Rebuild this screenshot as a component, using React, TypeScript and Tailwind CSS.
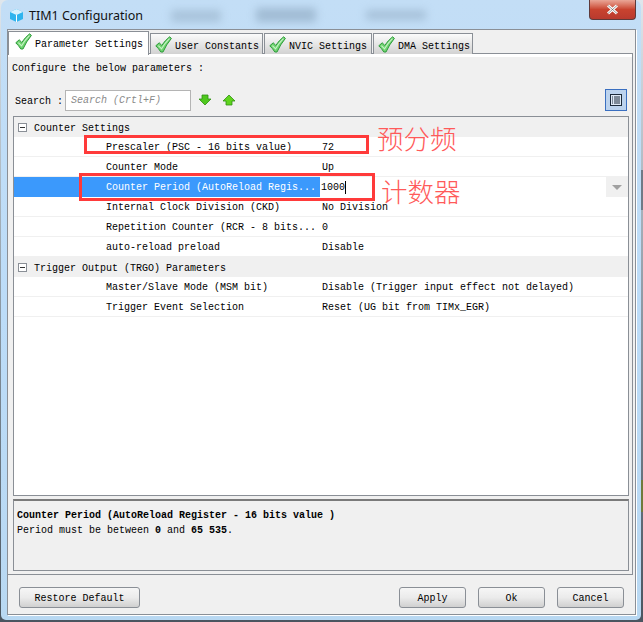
const mono = "font-['Liberation_Mono',monospace] text-[10px]";

function Check({ lift }: { lift?: boolean }) {
  return (
    <svg width="17" height="17" viewBox="0 0 17 17" className={`shrink-0 relative ${lift ? "-top-[2px]" : ""}`}>
      <path d="M0.8 9.8 L4.2 6.8 L6.8 9.4 Q10 4.4 14.6 0.8 L16.4 2.4 Q11.2 8.6 8 16 L5.8 16 Q3.6 12.4 0.8 9.8 Z" fill="#6fd36f" stroke="#2f9a3c" strokeWidth="1" strokeLinejoin="round" />
      <path d="M3.4 9.6 L6.6 12.8 Q10 6.8 14.4 2.6" fill="none" stroke="#c9f3c9" strokeWidth="1.1" />
    </svg>
  );
}

function Tab({ label, active, w }: { label: string; active?: boolean; w: string }) {
  return active ? (
    <div className={`${w} h-[24px] bg-white border border-[#8a8f96] border-b-0 flex items-center pl-[6px] gap-[3px] relative z-10`}>
      <Check lift />
      <span className="text-black whitespace-pre relative top-px">{label}</span>
    </div>
  ) : (
    <div className={`${w} h-[21px] mt-[2px] ml-px border border-[#8a8f96] border-b-0 bg-gradient-to-b from-[#fbfbfb] to-[#d2d2d2] flex items-center pl-[4px] pt-px gap-[3px]`}>
      <Check />
      <span className="text-black whitespace-pre relative top-[2px]">{label}</span>
    </div>
  );
}

function Group({ label }: { label: string }) {
  return (
    <div className="h-[20px] bg-[#f0f0f0] flex items-center pl-[4px] gap-[7px]">
      <span className="w-[9px] h-[9px] border border-[#8a8f96] bg-white flex items-center justify-center">
        <span className="w-[5px] h-px bg-[#333]" />
      </span>
      <span className="whitespace-pre text-black relative top-px">{label}</span>
    </div>
  );
}

function Row({ name, value }: { name: string; value: string }) {
  return (
    <div className="h-[20px] pt-[2px] flex items-center border-b border-[#f0f0f0]">
      <div className="w-[306px] shrink-0 pl-[92px] whitespace-pre text-black">{name}</div>
      <div className="pl-[2px] whitespace-pre text-black">{value}</div>
    </div>
  );
}

function Btn({ label, w }: { label: string; w: string }) {
  return (
    <div className={`${w} h-[21px] pt-px border border-[#8a8f96] rounded-[3px] bg-gradient-to-b from-[#f6f6f6] via-[#ebebeb] to-[#d0d0d0] flex items-center justify-center text-black`}>
      {label}
    </div>
  );
}

export default function App() {
  return (
    <div className="relative w-[643px] h-[622px] overflow-hidden bg-gradient-to-b from-[#dfe6ec] via-[#8b98a3] to-[#4a5560]">
      {/* desktop showing at the window's right edge */}
      <div className="absolute right-0 top-[480px] w-[3px] h-[32px] bg-[#6f7a3c]" />
      <div className="absolute right-0 top-[170px] w-[3px] h-[40px] bg-[#6f7a86]" />

      <div className={`${mono} relative w-[640px] h-[620px] ml-px pl-[6px] pt-[29px] rounded-t-[7px] rounded-b-[5px] bg-gradient-to-b from-[#c3def6] via-[#bcdcf8] to-[#b8d8f2]`}>
        {/* blurred desktop behind the glass title bar */}
        <div className="absolute left-[170px] top-[10px] w-[50px] h-[12px] bg-[#8fa9c0] blur-[4px] opacity-50" />
        <div className="absolute left-[255px] top-[8px] w-[60px] h-[14px] bg-[#7f9ab2] blur-[4px] opacity-50" />
        <div className="absolute left-[365px] top-[10px] w-[60px] h-[10px] bg-[#8ba5bd] blur-[4px] opacity-50" />

        {/* title bar content */}
        <div className="absolute left-[8px] top-[7px] flex items-center gap-[5px] h-[17px]">
          <svg width="15" height="15" viewBox="0 0 15 15">
            <path d="M7.5 1 L14 4 V11 L7.5 14 L1 11 V4 Z" fill="#2fb4ee" />
            <path d="M7.5 7 L14 4 L7.5 1 L1 4 Z" fill="#d6f1fd" />
            <path d="M7.5 7 V14" stroke="#ffffff" strokeWidth="1" />
          </svg>
          <span className="font-['Noto_Sans',sans-serif] text-[12.5px] text-[#111] relative top-px">TIM1 Configuration</span>
        </div>
        <div className="absolute left-[588px] top-0 w-[47px] h-[20px] rounded-b-[4px] border border-t-0 border-[#5e3a3a] bg-gradient-to-b from-[#e9a697] via-[#c8432f] to-[#b93a2e] flex items-center justify-center">
          <svg width="13" height="11" viewBox="0 0 13 11">
            <path d="M2 1.5 L11 9.5 M11 1.5 L2 9.5" stroke="#fff" strokeWidth="3" />
            <path d="M2 1.5 L11 9.5 M11 1.5 L2 9.5" stroke="#555" strokeWidth="0.6" />
          </svg>
        </div>

        {/* client area */}
        <div className="relative w-[629px] h-[586px] bg-[#f0f0f0] border border-[#8a8f96] shadow-[1px_1px_0_#ffffff] flex flex-col">
          <div className="flex items-start h-[23px] pt-px shrink-0 relative z-10">
            <Tab label="Parameter Settings" active w="w-[141px]" />
            <Tab label="User Constants" w="w-[113px]" />
            <Tab label="NVIC Settings" w="w-[108px]" />
            <Tab label="DMA Settings" w="w-[100px]" />
          </div>

          {/* tab pane */}
          <div className="mr-[2px] h-[522px] shrink-0 border-t border-r border-b border-[#8a8f96] flex flex-col">
            <div className="h-[3px] bg-white shrink-0" />
            <div className="h-[32px] shrink-0 pl-[4px] pt-[6px] leading-[12px] whitespace-pre text-black">Configure the below parameters :</div>
            <div className="flex items-center h-[22px] pl-[7px] pr-[5px] mb-[5px] shrink-0">
              <span className="w-[50px] whitespace-pre text-black relative top-px">Search :</span>
              <div className="w-[126px] h-[21px] border border-[#b4b4b4] bg-white flex items-center pl-[5px] pt-px italic text-[#8a8a8a] whitespace-pre">Search (Crtl+F)</div>
              <svg width="14" height="12" viewBox="0 0 14 12" className="ml-[7px]">
                <path d="M4 1 H10 V5 H13 L7 11 L1 5 H4 Z" fill="#4fc81e" stroke="#2f8f12" strokeWidth="0.8" />
              </svg>
              <svg width="14" height="12" viewBox="0 0 14 12" className="ml-[10px]">
                <path d="M4 11 H10 V7 H13 L7 1 L1 7 H4 Z" fill="#5fd41e" stroke="#2f8f12" strokeWidth="0.8" />
              </svg>
              <div className="ml-auto w-[22px] h-[22px] bg-[#bcd3ee] border border-[#3a6fc0] flex items-center justify-center">
                <svg width="12" height="12" viewBox="0 0 12 12">
                  <rect x="0.5" y="0.5" width="11" height="11" fill="#dfe9f6" stroke="#1c2a3a" />
                  <path d="M2 3 H3 M4 3 H10 M2 5 H3 M4 5 H10 M2 7 H3 M4 7 H10 M2 9 H3 M4 9 H10" stroke="#1c2a3a" />
                </svg>
              </div>
            </div>

            {/* property tree */}
            <div className="ml-[5px] w-[616px] h-[380px] shrink-0 border border-[#8a8f96] bg-white">
              <Group label="Counter Settings" />
              <Row name="Prescaler (PSC - 16 bits value)" value="72" />
              <Row name="Counter Mode" value="Up" />
              <div className="h-[20px] flex items-stretch">
                <div className="w-[306px] shrink-0 bg-[#3b99fc] text-white pl-[92px] pt-px whitespace-pre flex items-center">Counter Period (AutoReload Regis...</div>
                <div className="flex-1 pl-px pt-px flex items-center text-black">
                  1000<span className="w-px h-[13px] bg-black" />
                </div>
                <div className="w-[22px] bg-[#f0f0f0] flex items-center justify-center">
                  <span className="w-0 h-0 border-x-[5px] border-x-transparent border-t-[5px] border-t-[#a0a0a0]" />
                </div>
              </div>
              <Row name="Internal Clock Division (CKD)" value="No Division" />
              <Row name="Repetition Counter (RCR - 8 bits..." value="0" />
              <Row name="auto-reload preload" value="Disable" />
              <Group label="Trigger Output (TRGO) Parameters" />
              <Row name="Master/Slave Mode (MSM bit)" value="Disable (Trigger input effect not delayed)" />
              <Row name="Trigger Event Selection" value="Reset (UG bit from TIMx_EGR)" />
            </div>

            {/* description */}
            <div className="ml-[5px] mt-[3px] w-[616px] h-[72px] shrink-0 border border-[#8a8f96] border-t-2 border-t-[#7a7a7a] bg-[#f0f0f0] pl-[3px] pt-[8px]">
              <div className="font-bold text-black whitespace-pre leading-[14px]">Counter Period (AutoReload Register - 16 bits value )</div>
              <div className="text-black whitespace-pre leading-[15px]">Period must be between <b>0</b> and <b>65 535</b>.</div>
            </div>
          </div>

          <div className="flex items-center pl-[11px] pt-[12px]">
            <Btn label="Restore Default" w="w-[121px]" />
            <div className="ml-[259px]"><Btn label="Apply" w="w-[67px]" /></div>
            <div className="ml-[12px]"><Btn label="Ok" w="w-[67px]" /></div>
            <div className="ml-[12px]"><Btn label="Cancel" w="w-[67px]" /></div>
          </div>
        </div>
      </div>

      {/* hand-drawn annotations on top of the screenshot */}
      <div className="absolute left-[84px] top-[135px] w-[285px] h-[19px] border-[3px] border-[#ff3a3a]" />
      <div className="absolute left-[79px] top-[173px] w-[296px] h-[28px] border-[3px] border-[#ff3a3a]" />
      <div className="absolute left-[377px] top-[120px] font-['Noto_Sans_CJK_SC',sans-serif] text-[26.5px] leading-[36px] text-[#ff5a5a] font-light">预分频</div>
      <div className="absolute left-[381px] top-[173px] font-['Noto_Sans_CJK_SC',sans-serif] text-[26.5px] leading-[36px] text-[#ff5a5a] font-light">计数器</div>
    </div>
  );
}
